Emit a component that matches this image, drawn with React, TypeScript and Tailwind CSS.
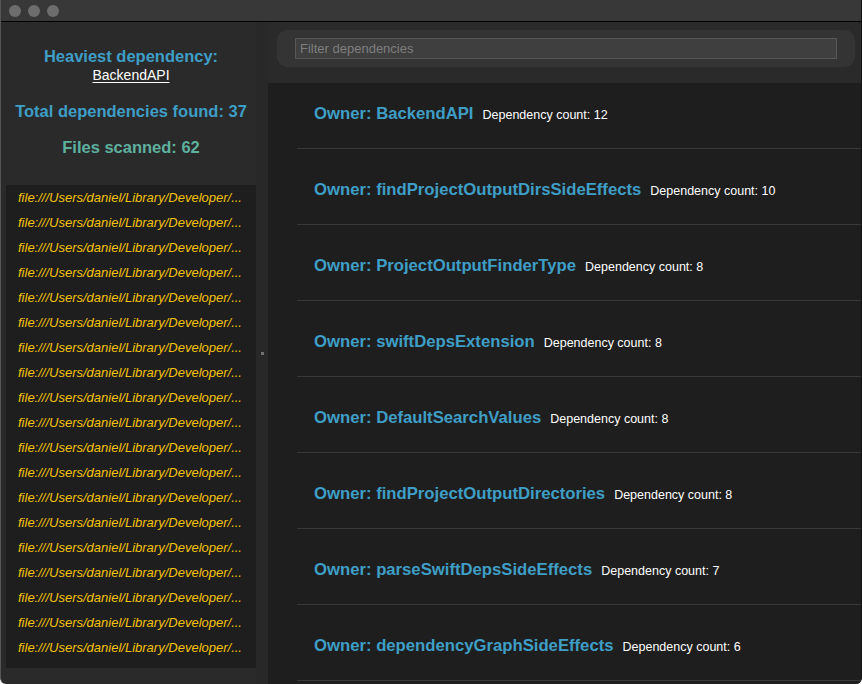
const owners = [
  { name: "BackendAPI", count: 12 },
  { name: "findProjectOutputDirsSideEffects", count: 10 },
  { name: "ProjectOutputFinderType", count: 8 },
  { name: "swiftDepsExtension", count: 8 },
  { name: "DefaultSearchValues", count: 8 },
  { name: "findProjectOutputDirectories", count: 8 },
  { name: "parseSwiftDepsSideEffects", count: 7 },
  { name: "dependencyGraphSideEffects", count: 6 },
];

const files = Array.from({ length: 20 }, (_, i) => i);

export default function App() {
  return (
    <div className="w-[862px] h-[684px] flex flex-col bg-[#2a2a2a] overflow-hidden rounded-b-[6px] border-l border-[#555] border-r border-r-[#111] font-['Liberation_Sans',Arial,sans-serif]">
      {/* Title bar */}
      <div className="h-[22px] shrink-0 bg-[#383838] border-b border-black flex items-center gap-[7px] pl-[8px]">
        {[0, 1, 2].map(i => (
          <span key={i} className="w-3 h-3 rounded-full bg-[#6d6d6d]" />
        ))}
      </div>

      <div className="flex flex-1 min-h-0">
        {/* Sidebar */}
        <div className="w-[255px] pl-[5px] flex flex-col shrink-0">
          <div className="pt-[24px] flex flex-col items-center text-center">
            <div className="text-[16.5px] leading-[20px] font-bold text-[#3e9ec6]">
              Heaviest dependency:
            </div>
            <div className="text-[14px] leading-[18px] text-white underline underline-offset-[2px]">
              BackendAPI
            </div>
            <div className="mt-[17px] text-[16.5px] leading-[20px] font-bold text-[#3e9ec6]">
              Total dependencies found: 37
            </div>
            <div className="mt-[16px] text-[16.5px] leading-[20px] font-bold text-[#5eb09e]">
              Files scanned: 62
            </div>
          </div>
          <div className="mt-[28px] h-[483px] bg-[#1e1e1e] overflow-hidden">
            {files.map(i => (
              <div
                key={i}
                className="h-[25px] leading-[25px] pl-[12px] text-[13px] italic text-[#f4c20d] whitespace-nowrap"
              >
                file:///Users/daniel/Library/Developer/...
              </div>
            ))}
          </div>
        </div>

        {/* Split divider */}
        <div className="w-[12px] shrink-0 bg-[#282828] flex items-center justify-center">
          <span className="w-[3px] h-[3px] bg-[#707070]" />
        </div>

        {/* Main */}
        <div className="flex-1 min-w-0 flex flex-col">
          <div className="pt-[8px] pl-[9px] pr-[6px] pb-[16px] bg-[#2a2a2a]">
            <div className="h-[37px] rounded-[10px] bg-[#343434] flex items-center pl-[18px] pr-[18px]">
              <div className="w-full h-[21px] bg-[#3f3f3f] border border-[#575757] flex items-center pl-[4px] text-[13px] text-[#7e7e7e]">
                Filter dependencies
              </div>
            </div>
          </div>
          <div className="flex-1 min-h-0 bg-[#1e1e1e] overflow-hidden">
            <div className="-mt-[10px]">
              {owners.map(o => (
                <div key={o.name} className="ml-[29px] h-[76px] border-b border-[#383838] pl-[17px] pt-[31px]">
                  <div className="flex items-baseline gap-[9px] whitespace-nowrap">
                    <span className="text-[16.7px] leading-[20px] font-bold text-[#3e9ec6]">
                      Owner: {o.name}
                    </span>
                    <span className="text-[12.5px] text-white">
                      Dependency count: {o.count}
                    </span>
                  </div>
                </div>
              ))}
            </div>
          </div>
        </div>
      </div>
    </div>
  );
}
